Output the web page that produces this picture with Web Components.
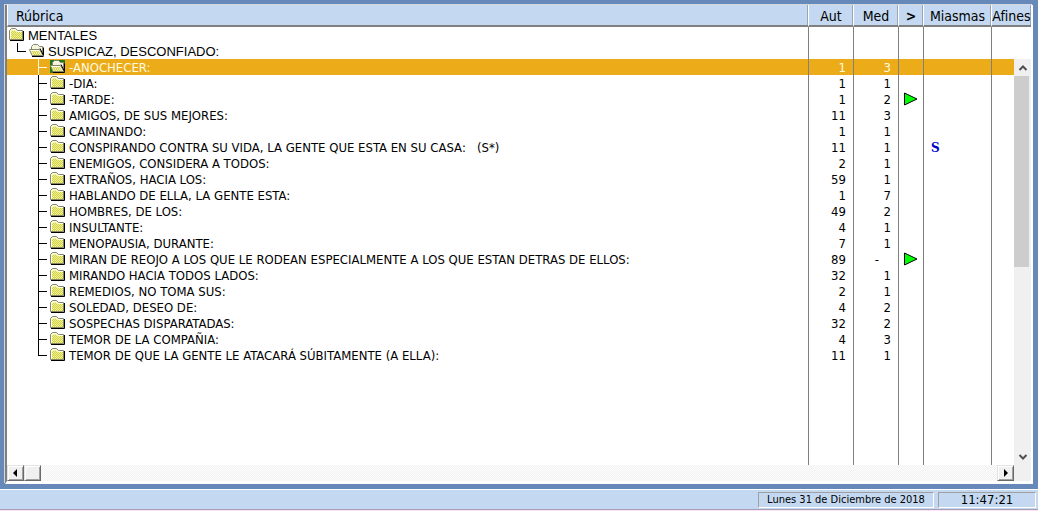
<!DOCTYPE html>
<html lang="es">
<head>
<meta charset="utf-8">
<meta name="viewport" content="width=device-width, initial-scale=1">
<title>Rúbricas</title>
<style>
  body {
    margin: 0;
    min-height: 100vh;
    display: flex;
    flex-direction: column;
    background: #6789ba;
    color: #000;
    font-family: "DejaVu Sans Condensed", "Noto Sans", sans-serif;
    font-size: 13px;
  }

  rubric-panel {
    flex: 1;
  }
</style>
</head>
<body>
  <rubric-panel>
    <rubric-table></rubric-table>
  </rubric-panel>
  <status-bar>
    <status-pane>Lunes 31 de Diciembre de 2018</status-pane>
    <status-pane clock>11:47:21</status-pane>
  </status-bar>

<script>
const RUBRICS = [
  { name: "MENTALES", level: 0 },
  { name: "SUSPICAZ, DESCONFIADO:", level: 1, open: true },
  { name: "-ANOCHECER:", aut: 1, med: 3, open: true, selected: true },
  { name: "-DIA:", aut: 1, med: 1 },
  { name: "-TARDE:", aut: 1, med: 2, flag: true },
  { name: "AMIGOS, DE SUS MEJORES:", aut: 11, med: 3 },
  { name: "CAMINANDO:", aut: 1, med: 1 },
  { name: "CONSPIRANDO CONTRA SU VIDA, LA GENTE QUE ESTA EN SU CASA:   (S*)", aut: 11, med: 1, miasma: "S" },
  { name: "ENEMIGOS, CONSIDERA A TODOS:", aut: 2, med: 1 },
  { name: "EXTRAÑOS, HACIA LOS:", aut: 59, med: 1 },
  { name: "HABLANDO DE ELLA, LA GENTE ESTA:", aut: 1, med: 7 },
  { name: "HOMBRES, DE LOS:", aut: 49, med: 2 },
  { name: "INSULTANTE:", aut: 4, med: 1 },
  { name: "MENOPAUSIA, DURANTE:", aut: 7, med: 1 },
  { name: "MIRAN DE REOJO A LOS QUE LE RODEAN ESPECIALMENTE A LOS QUE ESTAN DETRAS DE ELLOS:", aut: 89, med: "-", flag: true },
  { name: "MIRANDO HACIA TODOS LADOS:", aut: 32, med: 1 },
  { name: "REMEDIOS, NO TOMA SUS:", aut: 2, med: 1 },
  { name: "SOLEDAD, DESEO DE:", aut: 4, med: 2 },
  { name: "SOSPECHAS DISPARATADAS:", aut: 32, med: 2 },
  { name: "TEMOR DE LA COMPAÑIA:", aut: 4, med: 3 },
  { name: "TEMOR DE QUE LA GENTE LE ATACARÁ SÚBITAMENTE (A ELLA):", aut: 11, med: 1, last: true },
];

class FolderIcon extends HTMLElement {
  constructor() {
    super();
    this.attachShadow({ mode: "open" });
  }

  connectedCallback() {
    const closed = `
      <path d="M1 13.5H14.5V4" fill="none" stroke="#000"/>
      <path d="M.5 12.5V3.5L2.5 1.5H6.5L8.5 3.5H13.5V12.5Z" fill="#f0f0a0" stroke="#85856c"/>
      <path d="M2 5.5H13M3 6.5H13M2 7.5H13M3 8.5H13M2 9.5H13M3 10.5H13M2 11.5H13M3 4.5H7" stroke="#d2d23c" stroke-dasharray="1 1"/>
      <path d="M1.5 12V4L3 2.5H6L8 4.5H13" fill="none" stroke="#fffff0"/>`;
    const opened = `
      <path d="M3 13.5H14.5" fill="none" stroke="#000"/>
      <path d="M2.5 7V3.5L4.5 1.5H8.5L10.5 3.5H13.5V12.5Z" fill="#f6f6e0" stroke="#85856c"/>
      <path d="M3 12.5L.5 6.5H10.5L13.5 12.5Z" fill="#f0f0a0" stroke="#85856c"/>
      <path d="M3 8.5H10M4 9.5H11M4 10.5H11M5 11.5H12" stroke="#d2d24c" stroke-dasharray="1 1"/>
      <path d="M1.5 7.5H10L12.5 12" fill="none" stroke="#fffff0"/>
      <path d="M11 5.5L14.5 12.5V4.5" fill="none" stroke="#000"/>`;

    this.shadowRoot.innerHTML = `
      <style>
        :host {
          display: block;
          flex: none;
          width: 16px;
          height: 16px;
        }

        :host([selected]) {
          background: linear-gradient(#1f7a1f, #1f7a1f) 0 1px / 15px 13px no-repeat;
        }

        svg {
          display: block;
        }
      </style>
      <svg width="16" height="16" viewBox="0 0 16 16" aria-hidden="true">${this.hasAttribute("open") ? opened : closed}</svg>
    `;
  }
}

class TreeNode extends HTMLElement {
  constructor() {
    super();
    this.attachShadow({ mode: "open" });
    this.render();
  }

  render() {
    this.shadowRoot.innerHTML = `
      <style>
        :host {
          display: flex;
          align-items: center;
          height: 16px;
          padding-left: 31px;
        }

        .branch {
          flex: none;
          width: 9px;
          height: 16px;
          margin-right: 3px;
          background:
            linear-gradient(currentColor, currentColor) 0 0 / 1px 100% no-repeat,
            linear-gradient(currentColor, currentColor) 0 8px / 9px 1px no-repeat;
        }

        .text {
          margin-left: 3px;
          padding-top: 2px;
          line-height: 14px;
          white-space: pre;
        }

        :host([level="0"]),
        :host([level="1"]) {
          font-family: "Liberation Sans", Arial, sans-serif;
        }

        :host([level="0"]) {
          padding-left: 2px;
        }

        :host([level="0"]) .branch {
          display: none;
        }

        :host([level="1"]) {
          padding-left: 10px;
        }

        :host([level="1"]) .branch,
        :host([last]) .branch {
          background-size: 1px 8px, 9px 1px;
        }
      </style>
      <span class="branch"></span>
      <slot name="icon"></slot>
      <span class="text"><slot></slot></span>
    `;
  }
}

class RubricTable extends HTMLElement {
  constructor() {
    super();
    this.attachShadow({ mode: "open" });
    this.render();
  }

  row(r) {
    const level = r.level ?? 2;
    const open = r.open ? "open" : "";
    const flag = `
      <svg width="14" height="14" viewBox="0 0 14 14" role="img" aria-label="Ver más">
        <path d="M.5 1L13 7L.5 13Z" fill="#0f0" stroke="#000"/>
      </svg>`;

    return `
      <tr class="${r.selected ? "selected" : ""}">
        <td>
          <tree-node level="${level}" ${r.last ? "last" : ""}><folder-icon slot="icon" ${open} ${r.selected ? "selected" : ""}></folder-icon>${r.name}</tree-node>
        </td>
        <td class="num">${r.aut ?? ""}</td>
        <td class="num ${r.med === "-" ? "none" : ""}">${r.med ?? ""}</td>
        <td class="flag">${r.flag ? flag : ""}</td>
        <td class="miasma">${r.miasma ?? ""}</td>
        <td></td>
      </tr>`;
  }

  render() {
    this.shadowRoot.innerHTML = `
      <style>
        :host {
          display: grid;
        }

        table {
          width: 100%;
          height: 100%;
          table-layout: fixed;
          border-collapse: separate;
          border-spacing: 0;
          background: #fff;
        }

        .aut, .med { width: 45px; }
        .gt { width: 25px; }
        .mia { width: 68px; }
        .afi { width: 40px; }

        th {
          box-sizing: border-box;
          height: 22px;
          padding: 2px 0 0;
          background: #c4d9f1;
          border-left: 1px solid #fff;
          border-bottom: 2px solid #808080;
          box-shadow: inset -1px 0 #9aa5b3;
          font-size: 14px;
          font-weight: normal;
          line-height: 18px;
          text-align: center;
          white-space: nowrap;
        }

        th:first-child {
          padding-left: 8px;
          text-align: left;
        }

        th b {
          font-weight: bold;
        }

        td {
          height: 16px;
          padding: 0;
          line-height: 16px;
          white-space: nowrap;
          overflow: hidden;
        }

        td + td {
          border-left: 1px solid #808080;
        }

        .num {
          box-sizing: border-box;
          padding-top: 2px;
          padding-right: 7px;
          line-height: 14px;
          text-align: right;
        }

        .none {
          padding-right: 19px;
        }

        .flag {
          text-align: center;
        }

        .flag svg {
          display: block;
          margin: auto;
        }

        .miasma {
          box-sizing: border-box;
          padding-top: 2px;
          padding-left: 7px;
          color: #00c;
          font-family: "DejaVu Serif", serif;
          font-size: 12px;
          font-weight: bold;
          line-height: 14px;
        }

        .selected td {
          background: #ecac1a;
          color: #fffbe0;
        }

        .rest td {
          height: auto;
        }
      </style>

      <table>
        <colgroup>
          <col><col class="aut"><col class="med"><col class="gt"><col class="mia"><col class="afi">
        </colgroup>
        <thead>
          <tr>
            <th>Rúbrica</th><th>Aut</th><th>Med</th><th><b>&gt;</b></th><th>Miasmas</th><th>Afines</th>
          </tr>
        </thead>
        <tbody>
          ${RUBRICS.map((r) => this.row(r)).join("")}
          <tr class="rest"><td></td><td></td><td></td><td></td><td></td><td></td></tr>
        </tbody>
      </table>
    `;
  }
}

class ScrollRail extends HTMLElement {
  constructor() {
    super();
    this.attachShadow({ mode: "open" });
    this.render();
  }

  render() {
    this.shadowRoot.innerHTML = `
      <style>
        :host {
          display: flex;
          background: #f0f0f0;
        }

        button {
          display: grid;
          place-items: center;
          flex: none;
          box-sizing: border-box;
          height: 17px;
          padding: 0;
          border: 0;
          background: #f0f0f0;
          color: #505050;
        }

        path {
          fill: none;
          stroke: currentColor;
          stroke-width: 2;
        }

        .thumb {
          flex: none;
          box-sizing: border-box;
        }

        .space {
          flex: 1;
        }

        :host([vertical]) {
          flex-direction: column;
          align-items: stretch;
        }

        :host([vertical]) .thumb {
          height: 47%;
          margin-right: 2px;
          background: #cdcdcd;
        }

        :host(:not([vertical])) {
          background: repeating-conic-gradient(#f0f0f0 0 25%, #fff 0 50%) 0 0 / 2px 2px;
        }

        :host(:not([vertical])) button,
        :host(:not([vertical])) .thumb {
          width: 17px;
          height: 16px;
          background: #f0f0f0;
          border: 1px solid;
          border-color: #e3e3e3 #696969 #696969 #e3e3e3;
          box-shadow: inset 1px 1px #fff, inset -1px -1px #a0a0a0;
          color: #000;
        }

        :host(:not([vertical])) path {
          fill: currentColor;
          stroke: none;
        }
      </style>
      <button class="prev"><svg width="10" height="8" viewBox="0 0 10 8"><path></path></svg></button>
      <div class="thumb"></div>
      <div class="space"></div>
      <button class="next"><svg width="10" height="8" viewBox="0 0 10 8"><path></path></svg></button>
    `;
    this.prev = this.shadowRoot.querySelector(".prev");
    this.next = this.shadowRoot.querySelector(".next");
  }

  connectedCallback() {
    const vertical = this.hasAttribute("vertical");
    this.prev.setAttribute("aria-label", vertical ? "Subir" : "Izquierda");
    this.next.setAttribute("aria-label", vertical ? "Bajar" : "Derecha");
    this.prev.querySelector("path").setAttribute("d", vertical ? "M1.5 6L5 2.5L8.5 6" : "M6 0V8L2 4Z");
    this.next.querySelector("path").setAttribute("d", vertical ? "M1.5 2L5 5.5L8.5 2" : "M3 0V8L7 4Z");
  }
}

class RubricPanel extends HTMLElement {
  constructor() {
    super();
    this.attachShadow({ mode: "open" });
    this.render();
  }

  render() {
    // the vertical rail shares the table's area, below the two root rows
    this.shadowRoot.innerHTML = `
      <style>
        :host {
          display: grid;
          padding: 5px;
        }

        .frame {
          display: grid;
          grid-template-columns: 1fr 17px;
          grid-template-rows: 54px 1fr 16px;
          background: #f0f0f0;
          border-style: solid;
          border-width: 0 2px 3px;
          border-color: #fff #fff #fff #808080;
          box-shadow: -1px -1px #d4d8de;
        }

        ::slotted(rubric-table) {
          grid-area: 1 / 1 / 3 / 3;
        }

        .down {
          grid-area: 2 / 2;
        }

        .across {
          grid-area: 3 / 1;
        }
      </style>
      <div class="frame">
        <slot></slot>
        <scroll-rail class="down" vertical></scroll-rail>
        <scroll-rail class="across"></scroll-rail>
      </div>
    `;
  }
}

class StatusBar extends HTMLElement {
  constructor() {
    super();
    this.attachShadow({ mode: "open" });
    this.shadowRoot.innerHTML = `
      <style>
        :host {
          display: flex;
          justify-content: flex-end;
          gap: 4px;
          padding: 2px 2px 1px 0;
          background: #c4d9f1;
          border-top: 1px solid #fff;
          border-bottom: 1px solid #a79db5;
          box-shadow: 0 1px #fbe3f5;
          margin-bottom: 1px;
        }
      </style>
      <slot></slot>
    `;
  }
}

class StatusPane extends HTMLElement {
  constructor() {
    super();
    this.attachShadow({ mode: "open" });
    this.shadowRoot.innerHTML = `
      <style>
        :host {
          display: block;
          box-sizing: border-box;
          width: 176px;
          border: 1px solid;
          border-color: #a0a0a0 #fff #fff #a0a0a0;
          font-size: 11px;
          line-height: 14px;
          text-align: center;
          white-space: nowrap;
        }

        :host([clock]) {
          width: 98px;
          font-size: 13px;
        }
      </style>
      <slot></slot>
    `;
  }
}

customElements.define("folder-icon", FolderIcon);
customElements.define("tree-node", TreeNode);
customElements.define("rubric-table", RubricTable);
customElements.define("scroll-rail", ScrollRail);
customElements.define("rubric-panel", RubricPanel);
customElements.define("status-bar", StatusBar);
customElements.define("status-pane", StatusPane);
</script>
</body>
</html>
